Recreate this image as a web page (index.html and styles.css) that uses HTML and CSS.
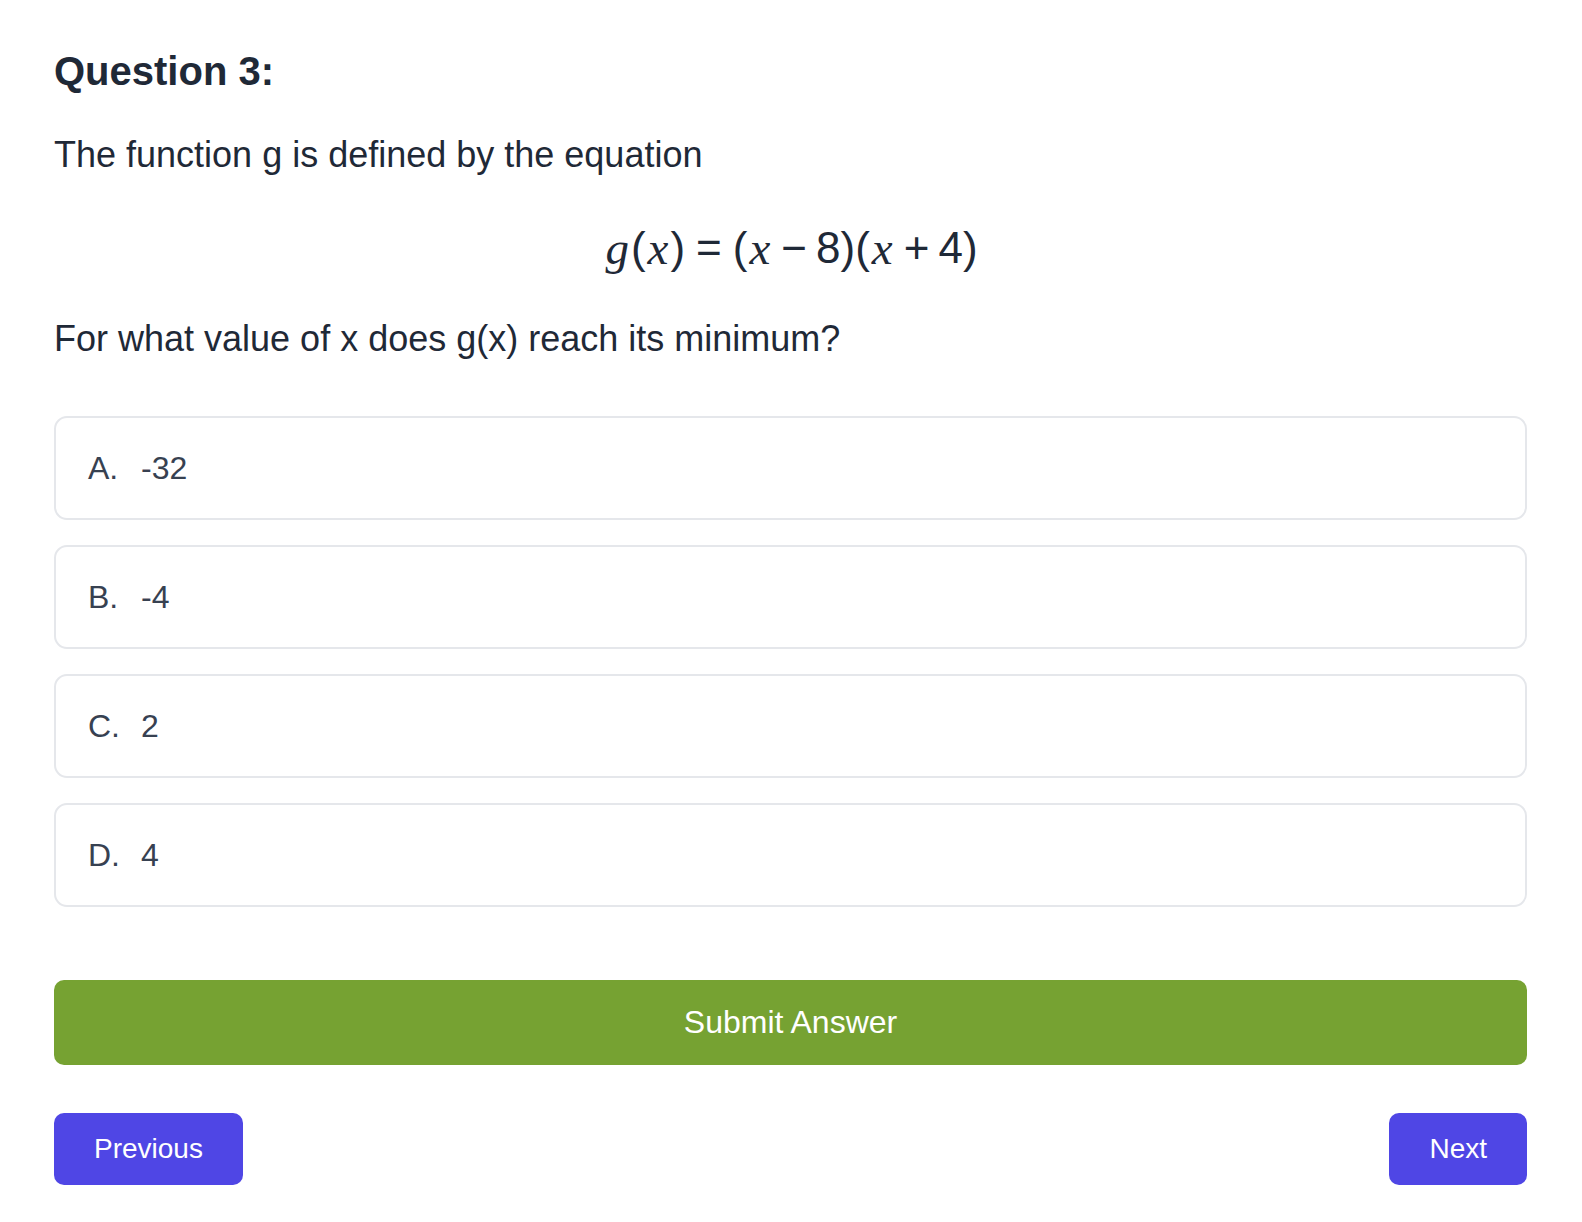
FILE: index.html
```html
<!DOCTYPE html>
<html lang="en">
<head>
<meta charset="utf-8">
<title>Question 3</title>
<link rel="stylesheet" href="styles.css">
</head>
<body>
<main class="quiz">
  <h1 class="q-title">Question 3:</h1>
  <p class="q-text">The function g is defined by the equation</p>
  <div class="equation">
    <span class="mi">g</span><span class="mo">(</span><span class="mi">x</span><span class="mo">)</span><span class="rel">=</span><span class="mo">(</span><span class="mi">x</span><span class="bin">−</span><span class="mn">8</span><span class="mo">)(</span><span class="mi">x</span><span class="bin">+</span><span class="mn">4</span><span class="mo">)</span>
  </div>
  <p class="q-text q-ask">For what value of x does g(x) reach its minimum?</p>
  <ul class="options">
    <li class="option"><span class="opt-letter">A.</span><span class="opt-value">-32</span></li>
    <li class="option"><span class="opt-letter">B.</span><span class="opt-value">-4</span></li>
    <li class="option"><span class="opt-letter">C.</span><span class="opt-value">2</span></li>
    <li class="option"><span class="opt-letter">D.</span><span class="opt-value">4</span></li>
  </ul>
  <button class="submit" type="button">Submit Answer</button>
  <div class="nav">
    <button class="nav-btn" type="button">Previous</button>
    <button class="nav-btn" type="button">Next</button>
  </div>
</main>
</body>
</html>
```
FILE: styles.css
```css
* { box-sizing: border-box; }
html, body { margin: 0; padding: 0; background: #ffffff; }
body {
  font-family: "Liberation Sans", Arial, Helvetica, sans-serif;
  color: #1f2937;
}
.quiz {
  padding: 47px 55px 40px 54px;
  display: flex;
  flex-direction: column;
}
.q-title {
  margin: 0;
  font-size: 40px;
  line-height: 48px;
  font-weight: 700;
  color: #1f2937;
}
.q-text {
  margin: 33px 0 0;
  font-size: 36px;
  line-height: 54px;
}
.equation {
  margin-top: 33px;
  height: 66px;
  display: flex;
  justify-content: center;
  align-items: center;
  font-size: 44px;
  color: #1f2937;
  font-family: "Liberation Sans", Arial, sans-serif;
}
.equation .mi {
  font-family: "Liberation Serif", "Times New Roman", serif;
  font-style: italic;
  font-size: 47px;
  padding: 0 2px;
}
.equation .rel { margin: 0 11px; }
.equation .bin { margin: 0 9px; }
.q-ask { margin-top: 31px; }
.options {
  list-style: none;
  margin: 50px 0 0;
  padding: 0;
  display: flex;
  flex-direction: column;
  gap: 25px;
}
.option {
  height: 104px;
  border: 2px solid #e5e7eb;
  border-radius: 13px;
  padding: 0 32px;
  display: flex;
  align-items: center;
  font-size: 32px;
  color: #374151;
}
.opt-letter { width: 53px; }
.submit {
  margin-top: 73px;
  height: 85px;
  border: 0;
  border-radius: 10px;
  background: #76a232;
  color: #ffffff;
  font-family: "Liberation Sans", Arial, sans-serif;
  font-size: 32px;
  cursor: pointer;
}
.nav {
  margin-top: 48px;
  display: flex;
  justify-content: space-between;
}
.nav-btn {
  height: 72px;
  padding: 0 40px;
  border: 0;
  border-radius: 10px;
  background: #4f46e5;
  color: #ffffff;
  font-family: "Liberation Sans", Arial, sans-serif;
  font-size: 28px;
  cursor: pointer;
}
```
